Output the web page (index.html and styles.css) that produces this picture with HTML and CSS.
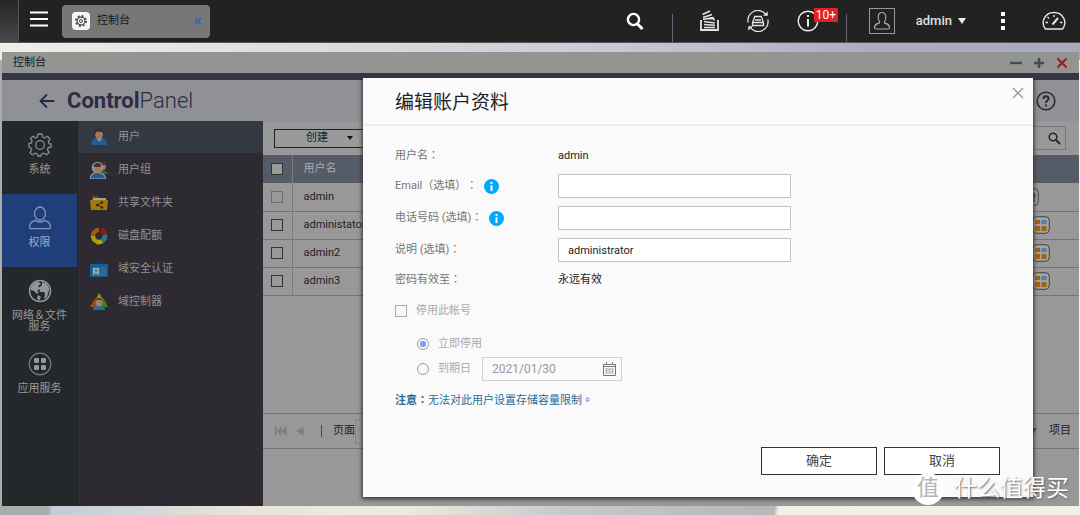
FILE: index.html
```html
<!DOCTYPE html>
<html lang="zh-CN">
<head>
<meta charset="utf-8">
<title>控制台</title>
<link rel="stylesheet" href="styles.css">
</head>
<body>
<div class="desktop">
  <header class="topbar">
    <div class="topbar-edge"></div>
    <button class="icon-btn menu-btn" aria-label="主菜单"><svg width="18" height="16" viewBox="0 0 18 16" stroke="#fff" stroke-width="2"><path d="M0 1.5h18M0 8h18M0 14.5h18"/></svg></button>
    <div class="task">
      <svg width="18" height="18" viewBox="0 0 18 18"><rect width="18" height="18" rx="4" fill="#f4f5f7"/><circle cx="9" cy="9" r="5" fill="none" stroke="#454a50" stroke-width="1.9" stroke-dasharray="1.96 1.96"/><circle cx="9" cy="9" r="3.9" fill="#f4f5f7" stroke="#454a50" stroke-width="1.1"/><circle cx="9" cy="9" r="1.5" fill="none" stroke="#454a50"/></svg>
      <span class="task-name">控制台</span>
      <button class="icon-btn" aria-label="关闭任务"><svg width="8" height="8" viewBox="0 0 8 8" stroke="#3a6d9d" stroke-width="2.2"><path d="M1 1l6 6M7 1L1 7"/></svg></button>
    </div>
    <nav class="tools">
      <button class="icon-btn" aria-label="搜索"><svg width="18" height="18" viewBox="0 0 18 18" fill="none" stroke="#fff"><circle cx="7.5" cy="7.5" r="5.6" stroke-width="2.4"/><path d="M11.5 12l5 5" stroke-width="3"/></svg></button>
      <span class="divider after-search"></span>
      <button class="icon-btn" aria-label="后台任务"><svg width="20" height="22" viewBox="0 0 20 22" fill="none" stroke="#e4e4e4" stroke-width="1.6"><path d="M3 11H2v9h17v-9h-1" stroke-width="1.8"/><path d="M5 17.500h11M5 14.500l11 .8M5 11.500l10.800 1.500M4.500 9l10-.5 1 2M4 7.500l9-3M3.500 4.500l7.500-3.500M4 9.500l10.500-2"/></svg></button>
      <button class="icon-btn sync-btn" aria-label="外接设备"><svg width="22" height="22" viewBox="0 0 22 22" fill="none" stroke="#e4e4e4" stroke-width="1.3"><path d="M1.200 12.500A9.800 9.800 0 0 1 19 5M20.800 9.500A9.800 9.800 0 0 1 3 17"/><path d="M16.500 5.500h4V2zM5.500 16.500h-4V20z" fill="#e4e4e4" stroke-width=".5"/><path d="M7.800 6.500h6.400l2.300 6v3h-11v-3zM5.500 12.500h11M8 10h6"/></svg></button>
      <button class="icon-btn info-btn" aria-label="事件通知"><svg width="22" height="22" viewBox="0 0 22 22" fill="none" stroke="#eee"><circle cx="11" cy="11" r="9.800" stroke-width="1.400"/><path d="M11 9v7.500M11 5v2" stroke-width="2"/></svg><span class="badge">10+</span></button>
      <span class="divider after-info"></span>
      <button class="icon-btn avatar" aria-label="用户选项"><svg width="18" height="20" viewBox="0 0 18 20" fill="none" stroke="#aaa" stroke-width="1.200"><path d="M6.500 10.500C4.500 8 4.500 1.500 9 1.500s4.500 6.500 2.500 9M6.500 10.500v1.500c-3 1-5 1.500-5 4.500 0 1 .5 1.500 1.500 1.500h12c1 0 1.500-.5 1.500-1.500 0-3-2-3.500-5-4.500v-1.500"/></svg></button>
      <button class="account">admin<span class="caret"></span></button>
      <button class="icon-btn dots" aria-label="更多"><svg width="6" height="18" viewBox="0 0 6 18" fill="#fff"><path d="M1 0h4v4H1zM1 7h4v4H1zM1 14h4v4H1z"/></svg></button>
      <button class="icon-btn" aria-label="控制面板"><svg width="24" height="20" viewBox="0 0 24 20" fill="none" stroke="#e8e8e8" stroke-width="1.400"><path d="M3.500 18C-2 11 3 1.500 12 1.500S26 11 20.500 18z"/><path d="M3.500 11.500H6M18 11.500h2.500M12 4v2M5.500 6l1.500 1.500"/><path d="M10.500 13.500L16 7" stroke-width="2"/></svg></button>
    </nav>
  </header>

  <main class="window">
    <div class="titlebar"><span>控制台</span>
      <div class="win-actions">
        <button class="icon-btn" aria-label="最小化"><svg width="12" height="12" viewBox="0 0 12 12" stroke="#444b52" stroke-width="2.400"><path d="M0 6h12"/></svg></button>
        <button class="icon-btn" aria-label="最大化"><svg width="12" height="12" viewBox="0 0 12 12" stroke="#444b52" stroke-width="2.600"><path d="M1 6h10M6 1v10"/></svg></button>
        <button class="icon-btn" aria-label="关闭"><svg width="12" height="12" viewBox="0 0 12 12" stroke="#941f1f" stroke-width="2"><path d="M1.500 1.500l9 9M10.500 1.500l-9 9"/></svg></button>
      </div>
    </div>
    <div class="panel-head">
      <button class="icon-btn" aria-label="返回"><svg width="16" height="16" viewBox="0 0 16 16" fill="none" stroke="#282a42" stroke-width="1.800"><path d="M15.500 8H2M8 1.500L1.500 8 8 14.500"/></svg></button>
      <h1><b>Control</b>Panel</h1>
      <button class="icon-btn help" aria-label="帮助"><svg width="20" height="20" viewBox="0 0 20 20" fill="none" stroke="#282a32"><circle cx="10" cy="10" r="8.800" stroke-width="1.600"/><path d="M7.400 8c0-3.700 5.200-3.500 5.200-.4C12.600 9.500 10 9.500 10 12M10 13.500v1.900" stroke-width="1.900"/></svg></button>
    </div>
    <div class="workspace">
      <nav class="sidebar">
        <a href="#system" class="side"><svg width="24" height="24" viewBox="0 0 24 24" fill="none" stroke="#8b8d8e" stroke-width="1.300" stroke-linejoin="round"><path d="M10 1h4l.7 3.200 2 .8 2.800-1.700 2.500 2.700-1.600 2.700.8 2L23 11v3l-2.800.7-.8 2 1.600 2.700-2.500 2.300-2.800-1.500-2 .8L13 23h-3l-.7-2-2-.8-2.800 1.500L2 19.500 3.600 17l-.8-2L1 14v-3.500l2.300-.5.8-2L2.500 5.500 5 3.300 7.300 5l2-.8z"/><circle cx="12" cy="12" r="4.300"/></svg>系统</a>
        <a href="#privilege" class="side selected"><svg width="24" height="24" viewBox="0 0 24 24" fill="none" stroke="#8595b8" stroke-width="1.300"><ellipse cx="12" cy="7.500" rx="5.500" ry="6.500"/><path d="M7.500 14.500C3 15.500 1.500 18 1.500 21c0 1 .5 1.700 1.500 1.700h18c1 0 1.500-.7 1.500-1.700 0-3-1.500-5.500-6-6.500-2.500 2-6.500 2-9 0z"/></svg>权限</a>
        <a href="#network" class="side"><svg width="24" height="24" viewBox="0 0 24 24"><circle cx="12" cy="12" r="10.500" fill="none" stroke="#959698" stroke-width="1.500"/><path d="M3 9C4 5 8 2 11 3l2 2-3 2 2 2-3 3 2 1-2 2-3-3-3-1zM14 3l3 1c3 2 4 4 4 7l-2 7-3 2 1-5-1-2-4 0-1-4 3-3zM10 16l3 2-2 4-2-3z" fill="#959698"/></svg>网络＆文件服务</a>
        <a href="#apps" class="side"><svg width="24" height="24" viewBox="0 0 24 24" fill="#959698"><circle cx="12" cy="12" r="10.800" fill="none" stroke="#77797a" stroke-width="1.300"/><rect x="6" y="6" width="5" height="5" rx="1"/><rect x="13" y="6" width="5" height="5" rx="1"/><rect x="6" y="13" width="5" height="5" rx="1"/><rect x="13" y="13" width="5" height="5" rx="1"/></svg>应用服务</a>
      </nav>
      <nav class="submenu">
        <a href="#users" class="sub selected"><svg width="18" height="18" viewBox="0 0 18 18"><path d="M1 17c0-5 3-7 6-7h4c3 0 6 2 6 7z" fill="#245d91"/><path d="M6.500 10l3 4 2.500-4z" fill="#9ba1a5"/><ellipse cx="9" cy="6.500" rx="3.800" ry="5" fill="#a1795b"/><path d="M4.800 6C4 0 13-1 13.300 4V6L12 4 7 3.500z" fill="#3c2927"/></svg>用户</a>
        <a href="#groups" class="sub"><svg width="18" height="18" viewBox="0 0 18 18"><path d="M11 10c3-1 6 0 7 3H12z" fill="#326f22"/><ellipse cx="13.500" cy="5" rx="2.500" ry="4" fill="#9b7155"/><path d="M11 4c0-4 5-4 5.500 0z" fill="#42302b"/><circle cx="7.500" cy="6.500" r="5.800" fill="#8f9798"/><path d="M0 18c0-5 3-7 7-7s9 2 9 7z" fill="#a4aaae"/><path d="M1 17.500c0-4 3-5.500 6-5.500s8 1.500 8 5.500z" fill="#245d91"/><ellipse cx="8" cy="8" rx="3.300" ry="4.300" fill="#a1795b"/><path d="M3.500 6C4 1 10 0 11.500 5L9 6 5 6z" fill="#42302b"/></svg>用户组</a>
        <a href="#folders" class="sub"><svg width="18" height="18" viewBox="0 0 18 18"><path d="M2 2h6l1 2h7v4H2z" fill="#69412d"/><path d="M3 4h13v4H3z" fill="#a6a59c"/><path d="M0 6h18l-1 10H1z" fill="#a47909"/><path d="M12 8.500L7 11l5 2.500" fill="none" stroke="#362916"/><g fill="#362916"><circle cx="12" cy="8.500" r="1.300"/><circle cx="7" cy="11" r="1.300"/><circle cx="12" cy="13.500" r="1.300"/></g></svg>共享文件夹</a>
        <a href="#quota" class="sub"><svg width="18" height="18" viewBox="0 0 18 18" fill="none" stroke-width="4.500"><path d="M9 15A6 6 0 0 1 3 9" stroke="#aa9c08"/><path d="M3 9A6 6 0 0 1 9 3" stroke="#a55a0c"/><path d="M11 3A6 6 0 0 1 15 8" stroke="#951b20"/><path d="M15 8A6 6 0 0 1 12 14" stroke="#207a9d"/><path d="M12 14A6 6 0 0 1 7 15" stroke="#b3a50a"/></svg>磁盘配额</a>
        <a href="#domain" class="sub"><svg width="18" height="18" viewBox="0 0 18 18"><path d="M6 0l3 2 3-2v5H6z" fill="#123b58"/><rect y="4" width="18" height="13" rx="1" fill="#145d96"/><rect x="2" y="7" width="14" height="9" fill="#2a6b9c"/><rect x="3" y="8" width="6" height="7" fill="#9eadae"/><circle cx="6" cy="10.500" r="1.500" fill="#537c8c"/><path d="M4 15c0-3 4-3 4 0z" fill="#537c8c"/></svg>域安全认证</a>
        <a href="#controller" class="sub"><svg width="18" height="18" viewBox="0 0 18 18"><path d="M9 0l5 8H5z" fill="#9f910b"/><path d="M5 5l5 9H0z" fill="#9a4c13"/><path d="M13.500 5l4.500 9H9z" fill="#448019"/><path d="M3 17c0-4 2-5 6-5s6 1 6 5z" fill="#28699b"/><ellipse cx="9" cy="9" rx="3.500" ry="4.500" fill="#a4815e"/><path d="M5 8C6 4 12 4 13 8L11 7H7z" fill="#4b382f"/></svg>域控制器</a>
      </nav>
      <section class="content">
        <div class="toolbar">
          <button class="create"><span>创建</span><i class="caret dark"></i></button>
          <button class="filter" aria-label="查找"><svg width="13" height="13" viewBox="0 0 13 13" fill="none" stroke="#262626"><circle cx="5" cy="5" r="3.800" stroke-width="1.500"/><path d="M8 8l4 4" stroke-width="2"/></svg></button>
        </div>
        <table class="users">
          <thead><tr><th class="pick"><input type="checkbox" aria-label="全选"></th><th>用户名</th><th class="acts"></th></tr></thead>
          <tbody>
            <tr><td class="pick"><input type="checkbox" disabled aria-label="admin"></td><td>admin</td><td class="acts first"><svg width="18" height="18" viewBox="0 0 18 18"><rect x=".7" y=".7" width="16.600" height="16.600" rx="4" fill="#a2a2a2" stroke="#444"/><path d="M11 5h3v9h-3z" fill="#925e12"/><path d="M9 6q5-3 5 3" fill="none" stroke="#333"/></svg></td></tr>
            <tr><td class="pick"><input type="checkbox" aria-label="administator"></td><td>administator</td><td class="acts"><svg width="18" height="18" viewBox="0 0 18 18"><rect x=".7" y=".7" width="16.600" height="16.600" rx="4" fill="#a2a2a2" stroke="#444"/><path d="M3 4h5v4H3zM3 10h5v5H3zM9.500 10h5v5h-5z" fill="#a3650b"/><path d="M9.500 4h5v4h-5z" fill="#597da9"/></svg></td></tr>
            <tr><td class="pick"><input type="checkbox" aria-label="admin2"></td><td>admin2</td><td class="acts"><svg width="18" height="18" viewBox="0 0 18 18"><rect x=".7" y=".7" width="16.600" height="16.600" rx="4" fill="#a2a2a2" stroke="#444"/><path d="M3 4h5v4H3zM3 10h5v5H3zM9.500 10h5v5h-5z" fill="#a3650b"/><path d="M9.500 4h5v4h-5z" fill="#597da9"/></svg></td></tr>
            <tr><td class="pick"><input type="checkbox" aria-label="admin3"></td><td>admin3</td><td class="acts"><svg width="18" height="18" viewBox="0 0 18 18"><rect x=".7" y=".7" width="16.600" height="16.600" rx="4" fill="#a2a2a2" stroke="#444"/><path d="M3 4h5v4H3zM3 10h5v5H3zM9.500 10h5v5h-5z" fill="#a3650b"/><path d="M9.500 4h5v4h-5z" fill="#597da9"/></svg></td></tr>
          </tbody>
        </table>
        <div class="pager">
          <button class="icon-btn" aria-label="首页" disabled><svg width="12" height="10" viewBox="0 0 12 10" fill="#7d7d7d"><path d="M0 0h1.500v10H0zM6.500 0v10L1.500 5zM11.500 0v10l-5-5z"/></svg></button>
          <button class="icon-btn" aria-label="上一页" disabled><svg width="8" height="10" viewBox="0 0 8 10" fill="#7d7d7d"><path d="M7.500 .5v9L0 5z"/></svg></button>
          <span class="bar"></span>
          <label class="page">页面<input type="text"></label>
          <span class="items"><i class="caret blue"></i>项目</span>
        </div>
      </section>
    </div>

    <section class="dialog" role="dialog" aria-labelledby="dlg-title">
      <header class="dialog-head">
        <h2 id="dlg-title">编辑账户资料</h2>
        <button class="icon-btn" aria-label="关闭"><svg width="12" height="12" viewBox="0 0 12 12" stroke="#999" stroke-width="1.300"><path d="M1 1l10 10M11 1L1 11"/></svg></button>
      </header>
      <form class="form">
        <div class="row"><span class="label"><span>用户名<span lang="zh-Hant">：</span></span></span><span>admin</span></div>
        <div class="row"><label class="label" for="email"><span>Email<span lang="zh-Hant">（</span>选填<span lang="zh-Hant">）：</span></span><svg width="15" height="15" viewBox="0 0 15 15"><circle cx="7.500" cy="7.500" r="7.500" fill="#00a8ff"/><path d="M6.500 3h2v2h-2zM6.500 6.200h2V12h-2z" fill="#fff"/></svg></label><input id="email" type="text"></div>
        <div class="row"><label class="label" for="phone"><span>电话号码 (选填)<span lang="zh-Hant">：</span></span><svg width="15" height="15" viewBox="0 0 15 15"><circle cx="7.500" cy="7.500" r="7.500" fill="#00a8ff"/><path d="M6.500 3h2v2h-2zM6.500 6.200h2V12h-2z" fill="#fff"/></svg></label><input id="phone" type="text"></div>
        <div class="row"><label class="label" for="desc"><span>说明 (选填)<span lang="zh-Hant">：</span></span></label><input id="desc" type="text" value="administrator"></div>
        <div class="row"><span class="label"><span>密码有效至<span lang="zh-Hant">：</span></span></span><span>永远有效</span></div>
        <label class="option disable"><input type="checkbox" disabled>停用此帐号</label>
        <div class="suboptions">
          <label class="option radio"><input type="radio" name="when" checked disabled>立即停用</label>
          <div class="expiry">
            <label class="option radio"><input type="radio" name="when" disabled>到期日</label>
            <span class="date"><input type="text" value="2021/01/30" disabled aria-label="到期日"><svg width="13" height="14" viewBox="0 0 13 14" fill="none" stroke="#777"><path d="M.5 2.500h12v11H.5zM.5 4.500h12M3.500 0v3M9.500 0v3"/><path d="M2.500 7h8M2.500 9h8M2.500 11h8" stroke-dasharray="2 1"/></svg></span>
          </div>
        </div>
        <p class="note"><b>注意<span lang="zh-Hant">：</span></b>无法对此用户设置存储容量限制<span lang="zh-Hant">。</span></p>
        <footer class="actions"><button type="button">确定</button><button type="button">取消</button></footer>
      </form>
    </section>
  </main>
  <div class="watermark"><span class="seal">值</span><span>什么值得买</span></div>
</div>
</body>
</html>
```

FILE: styles.css
```css
* { box-sizing: border-box; }
body {
  margin: 0;
  font: 11px/16px Roboto, "Noto Sans CJK SC", sans-serif;
  color: #222;
}
button, input { font: inherit; color: inherit; margin: 0; }
svg { display: block; flex: none; }
a { color: inherit; text-decoration: none; }
.icon-btn { border: 0; padding: 0; background: none; flex: none; }

.desktop {
  position: relative;
  min-height: 100vh;
  display: flex;
  flex-direction: column;
  background: linear-gradient(90deg, #efefe6 0, #dcdee0 28%, #c8ccd6 55%, #a9afc1 80%, #a5abba 100%) top / 100% 60px no-repeat,
    linear-gradient(100deg, #a6adaa 0, #a6adaa 136px, #c2ccd8 140px, #e9e6d8 340px, #eeecdf 480px, #c5cacb 640px, #b5b7b8 851px, #f0f0e9 855px, #f3f2e7 100%);
}

/* System bar */
.topbar {
  height: 43px;
  display: flex;
  align-items: center;
  background: #222;
  border-bottom: 1px solid #555;
  color: #fff;
}
.topbar-edge {
  width: 19px;
  align-self: stretch;
  background: linear-gradient(#252525, #484848);
  border-right: 1px solid #555;
}
.menu-btn { margin: 0 14px 4px 11px; }
.task {
  width: 148px;
  height: 33px;
  padding: 0 8px 0 10px;
  display: flex;
  align-items: center;
  border-radius: 4px;
  background: #777;
  color: #171717;
}
.task-name { flex: 1; margin-left: 7px; }
.tools { margin-left: auto; display: flex; align-items: center; height: 100%; padding-right: 14px; }
.divider { width: 1px; height: 28px; align-self: flex-end; background: #686578; }
.after-search { margin: 0 26px 0 28px; }
.sync-btn, .info-btn { margin-left: 28px; }
.info-btn { position: relative; }
.badge {
  position: absolute;
  left: 17px;
  top: -2px;
  height: 14px;
  padding: 0 2px;
  background: #df2027;
  color: #fff;
  font-size: 12px;
  line-height: 14px;
}
.after-info { margin: 0 22px 0 27px; }
.avatar { width: 26px; height: 26px; border: 1px solid #999; display: grid; place-items: center; }
.account {
  border: 0;
  background: none;
  padding: 0;
  margin: 0 34px 0 21px;
  display: flex;
  align-items: center;
  gap: 6px;
  color: #e0e0e0;
  font-size: 13px;
  font-weight: 500;
}
.caret { border: 4px solid transparent; border-top: 6px solid #eee; border-bottom: 0; }
.dots { margin-right: 36px; }

/* Window */
.window {
  position: relative;
  flex: 1;
  margin: 9px 1px 9px 2px;
  display: flex;
  flex-direction: column;
  background: #989898;
}
.titlebar {
  display: flex;
  justify-content: space-between;
  align-items: center;
  height: 28px;
  padding: 0 11px;
  background: #949592;
  border-bottom: 7px solid #353744;
  color: #171717;
}
.win-actions { display: flex; gap: 11px; }
.panel-head {
  height: 41px;
  padding: 0 23px 0 37px;
  display: flex;
  align-items: center;
  background: #909097;
}
.panel-head h1 {
  margin: 0 0 0 12px;
  font-size: 22px;
  line-height: 28px;
  font-weight: 300;
  color: #2c2c43;
}
.panel-head b { font-weight: 700; }
.help { margin-left: auto; }
.workspace { flex: 1; display: flex; }

.sidebar { width: 75px; background: #25282b; color: #989a9b; flex: none; }
.side {
  height: 73px;
  padding: 12px 8px 0;
  display: flex;
  flex-direction: column;
  align-items: center;
  gap: 7px;
  text-align: center;
  line-height: 11px;
}
.side.selected { background: #203e7a; color: #a4adc1; }
.submenu { width: 186px; background: #2d2b31; color: #929195; border-left: 1px solid #222126; flex: none; }
.sub { height: 32px; margin-bottom: 1px; padding-left: 12px; display: flex; align-items: center; gap: 10px; }
.sub.selected { background: #333841; }

.content { flex: 1; min-width: 0; display: flex; flex-direction: column; }
.toolbar { height: 34px; padding: 0 13px 0 11px; display: flex; justify-content: space-between; align-items: center; }
.create {
  width: 96px;
  height: 19px;
  padding: 0 0 0 31px;
  display: flex;
  align-items: center;
  gap: 19px;
  border: 1px solid #222;
  background: #9a9a9a;
}
.caret.dark { border-width: 3px; border-top: 4px solid #111; border-bottom: 0; }
.filter { width: 90px; height: 24px; padding: 0 4px; display: flex; align-items: center; justify-content: flex-end; border: 1px solid #777; background: none; }
.users { width: 100%; border-collapse: collapse; table-layout: fixed; }
.users tr { height: 28px; }
.users th { background: #555b67; color: #a8abb0; font-weight: 400; text-align: left; }
.users th, .users td { padding: 0 0 0 11px; }
.users td { border-bottom: 1px solid #737373; }
.users .pick { width: 29px; padding: 0 0 0 8px; border-right: 1px solid #7c7c7c; }
.users .acts { width: 47px; padding: 0; }
.users .first svg { margin-left: -11px; }
.users input, .option input[type="checkbox"] {
  appearance: none;
  display: block;
  width: 12px;
  height: 12px;
  border: 1px solid #333;
  background: transparent;
}
.users th input { background: #999; }
.users input:disabled { border-color: #6d6d6d; }
.pager {
  height: 36px;
  margin: auto 0 57px;
  padding: 0 8px 0 12px;
  display: flex;
  align-items: center;
  border: solid #747474;
  border-width: 1px 0;
}
.pager .icon-btn + .icon-btn { margin-left: 9px; }
.bar { width: 1px; height: 12px; margin: 0 11px 0 17px; background: #4c4b40; }
.page { display: flex; align-items: center; }
.page input { width: 40px; height: 25px; border: 1px solid #858585; background: none; }
.items { margin-left: auto; display: flex; align-items: center; gap: 12px; }
.caret.blue { border-top-color: #135083; }

/* Edit dialog */
.dialog {
  position: absolute;
  top: 26px;
  left: 361px;
  right: 46px;
  background: #fafafa;
  box-shadow: 0 1px 4px 1px #333;
}
.dialog-head {
  height: 48px;
  padding: 9px 9px 0 32px;
  display: flex;
  justify-content: space-between;
  align-items: flex-start;
  border-bottom: 2px solid #ededed;
}
.dialog-head h2 { margin: 0; font-size: 19px; line-height: 32px; font-weight: 400; color: #222; }
.form {
  padding: 20px 33px 22px 32px;
  display: flex;
  flex-direction: column;
  gap: 8px;
  text-spacing-trim: space-all;
}
.row { display: grid; grid-template-columns: 163px 233px; align-items: center; min-height: 20px; }
.label { display: flex; align-items: center; gap: 7px; color: #777; }
.row input { height: 24px; padding: 0 9px; border: 1px solid #c4c4c4; background: #fff; }
.option { display: flex; align-items: center; gap: 9px; min-height: 24px; color: #aaa; }
.disable { min-height: 26px; }
.option input[type="checkbox"] { border-color: #aaa; }
.suboptions { display: flex; flex-direction: column; gap: 1px; padding-left: 22px; }
.radio input {
  appearance: none;
  width: 12px;
  height: 12px;
  border: 1px solid #999;
  border-radius: 50%;
}
.radio input:checked { background: radial-gradient(circle, #7da2ef 3px, transparent 3px); }
.expiry { display: flex; align-items: center; gap: 11px; }
.date { width: 140px; height: 24px; padding: 0 5px 0 9px; display: flex; align-items: center; border: 1px solid #d0d0d0; }
.date input { flex: 1; min-width: 0; border: 0; padding: 0; background: none; color: #999; font-size: 12px; }
.note { margin: 4px 0 0; color: #286d99; }
.actions { display: flex; justify-content: flex-end; gap: 7px; margin-top: 30px; }
.actions button { width: 116px; height: 28px; border: 1px solid #333; background: #fff; font-size: 13px; color: #444; }

.watermark {
  position: absolute;
  right: 11px;
  bottom: 10px;
  display: flex;
  align-items: center;
  gap: 10px;
  color: #fff;
  font-size: 23px;
  line-height: 32px;
  text-shadow: 1px 1px 2px #666;
}
.seal { width: 32px; height: 32px; border-radius: 50%; background: #fff; color: #b5b5b5; font-size: 22px; line-height: 30px; text-align: center; text-shadow: none; }
```
